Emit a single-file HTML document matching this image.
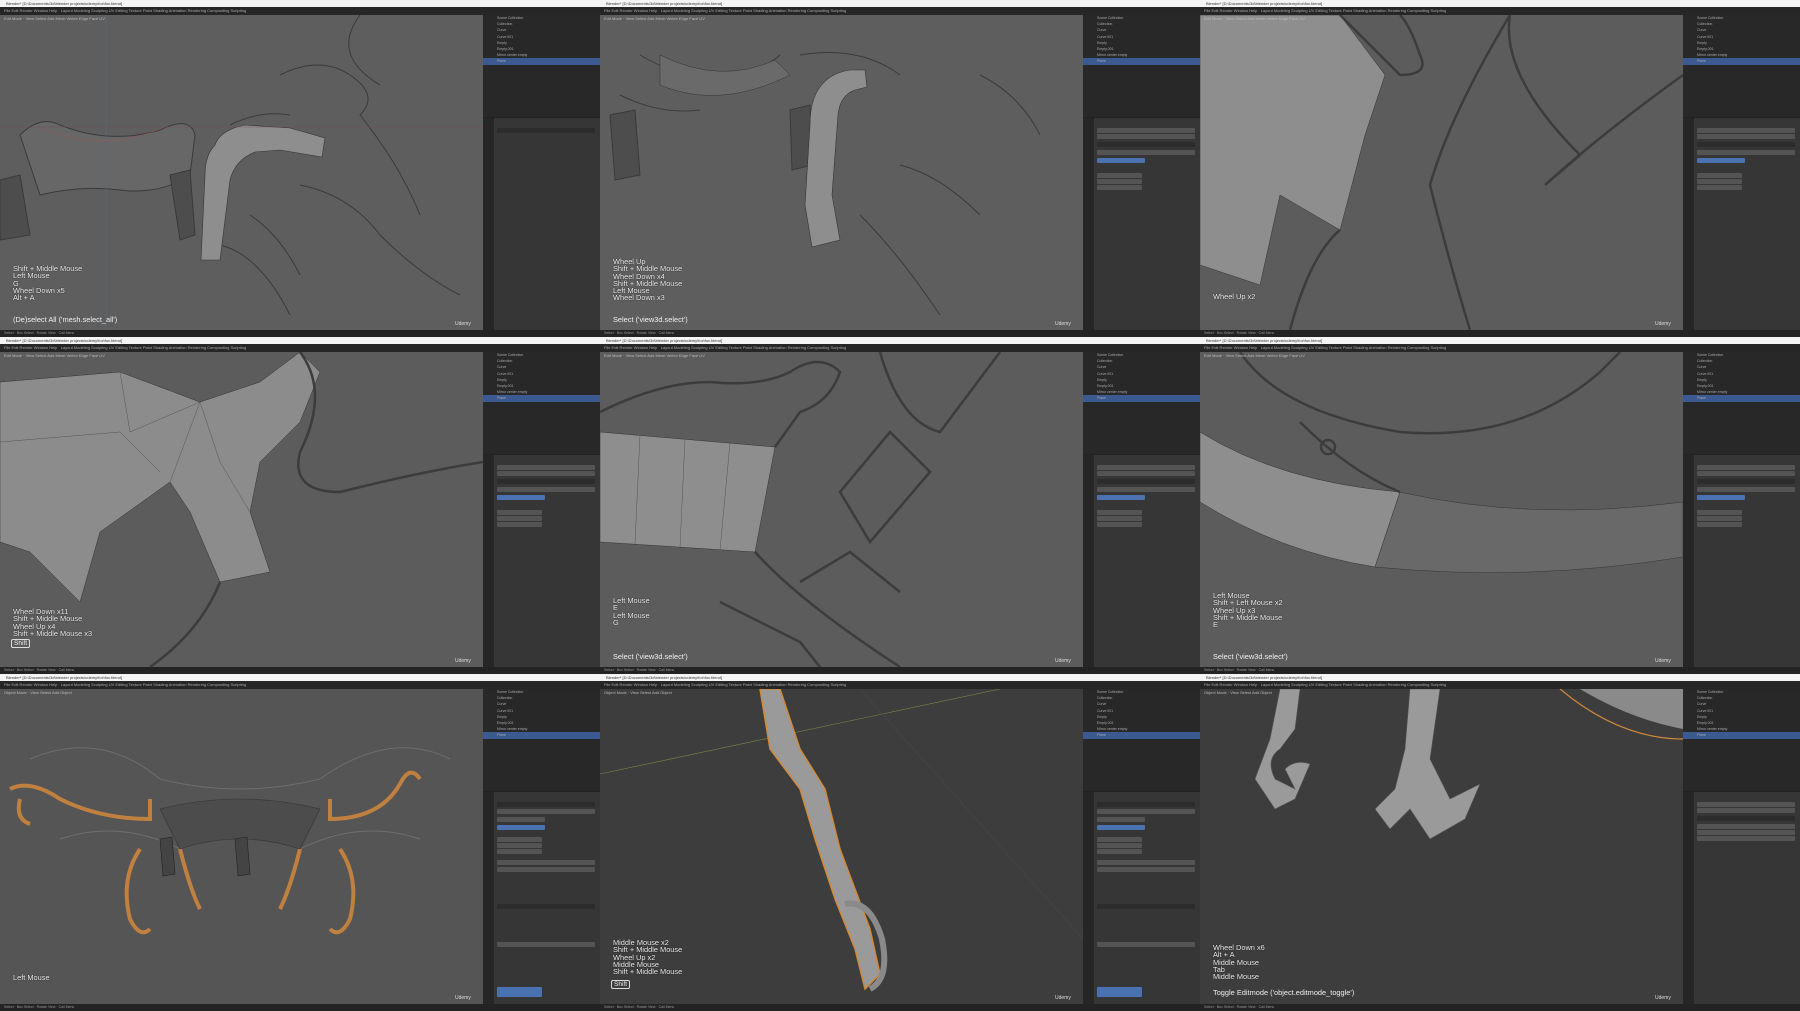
<!DOCTYPE html>
<html><head><meta charset="utf-8">
<style>
*{margin:0;padding:0;box-sizing:border-box}
body{width:1800px;height:1011px;background:#1d1d1d;overflow:hidden;font-family:"Liberation Sans",sans-serif;position:relative}
.c{position:absolute;width:600px;height:337px;overflow:hidden;background:#303030}
.tb{position:absolute;left:0;top:0;width:600px;height:7px;background:#f4f4f4;font-size:4px;color:#333;padding-left:6px;line-height:7px}
.mb{position:absolute;left:0;top:7px;width:600px;height:8px;background:#262626;font-size:4px;color:#aaa;line-height:8px;padding-left:4px;white-space:nowrap}
.vp{position:absolute;left:0;top:15px;width:483px;height:315px}
.vp svg{position:absolute;left:0;top:0}
.hd{position:absolute;left:0;top:15px;width:483px;height:8px;font-size:4px;color:#bbb;line-height:8px;padding-left:4px}
.ol{position:absolute;left:483px;top:15px;width:117px;height:102px;background:#282828}
.ol div{height:6.2px;font-size:3.5px;color:#aaa;line-height:6px;padding-left:14px}
.ol .sel{background:#3b5a92}
.pp{position:absolute;left:483px;top:117px;width:117px;height:213px;background:#363636;border-top:1px solid #222}
.pp .strip{position:absolute;left:0;top:0;width:11px;height:213px;background:#262626}
.pp .r{position:absolute;left:14px;height:5px;background:#545454;border-radius:1px}
.pp .b{background:#4a72b0}
.sb{position:absolute;left:0;top:330px;width:600px;height:7px;background:#232323;font-size:3.5px;color:#999;line-height:7px;padding-left:4px}
.tx{position:absolute;left:13px;color:#f0f0f0;font-size:7.4px;line-height:7.3px;text-shadow:0 0 1px #000}
.op{position:absolute;left:13px;color:#f0f0f0;font-size:7.4px}
.udemy{position:absolute;left:455px;top:321px;color:#ddd;font-size:5px}
.key{position:absolute;left:11px;border:1px solid #ddd;border-radius:2px;color:#eee;font-size:6.5px;padding:0 2px}
</style></head><body>

<!-- Cell template used 9 times with differing viewports -->
<!-- ROW 1 -->
<div class="c" style="left:0;top:0">
 <div class="tb">Blender* [D:\Documents\3d\blender projects\udemy\fox\fox.blend]</div>
 <div class="mb">File Edit Render Window Help &nbsp; Layout Modeling Sculpting UV Editing Texture Paint Shading Animation Rendering Compositing Scripting</div>
 <div class="vp" style="background:#5e5e5e"><svg width="483" height="315" viewBox="0 0 483 315">
  <g fill="none" stroke="#3a3a3a" stroke-width="1">
   <path d="M20 120 Q40 100 60 110 Q110 130 160 115 Q190 100 195 120 L190 160 Q160 180 120 175 Q80 170 40 180 Z" fill="#676767"/>
   <path d="M230 110 Q260 95 290 100 M280 60 Q320 40 350 60 Q380 80 360 100 Q400 150 420 200 M360 0 Q330 40 380 70 M250 200 Q280 220 300 260 M300 170 Q350 180 380 220 Q420 260 460 280 M220 230 Q260 240 290 300"/>
   <path d="M0 165 L20 160 L30 220 L0 225 Z M170 160 L190 155 L195 220 L180 225 Z" fill="#4d4d4d"/>
  </g>
  <path d="M215 130 Q220 115 245 110 L290 113 L325 123 L322 142 L280 135 L255 137 Q235 145 230 165 L220 245 L201 245 L205 160 Q205 140 215 130 Z" fill="#8e8e8e" stroke="#333" stroke-width=".6"/>
  <path d="M40 112 Q100 140 165 112" stroke="#a05555" stroke-width=".5" fill="none"/>
  <line x1="0" y1="112" x2="483" y2="112" stroke="#7a5050" stroke-width=".4"/>
  <line x1="106" y1="0" x2="106" y2="315" stroke="#55688a" stroke-width=".5"/>
 </svg>
 <div class="tx" style="top:250px">Shift + Middle Mouse<br>Left Mouse<br>G<br>Wheel Down x5<br>Alt + A</div>
 <div class="op" style="top:300px">(De)select All ('mesh.select_all')</div></div>
 <div class="hd">Edit Mode · View Select Add Mesh Vertex Edge Face UV</div>
 <div class="ol"><div>Scene Collection</div><div>Collection</div><div>Curve</div><div>Curve.001</div><div>Empty</div><div>Empty.001</div><div>Mirror center empty</div><div class="sel">Plane</div></div>
 <div class="pp"><div class="strip"></div><div class="r" style="top:10px;width:98px;background:#2c2c2c"></div></div>
 <div class="sb">Select · Box Select · Rotate View · Call Menu</div><div class="udemy">Udemy</div>
</div>

<div class="c" style="left:600px;top:0">
 <div class="tb">Blender* [D:\Documents\3d\blender projects\udemy\fox\fox.blend]</div>
 <div class="mb">File Edit Render Window Help &nbsp; Layout Modeling Sculpting UV Editing Texture Paint Shading Animation Rendering Compositing Scripting</div>
 <div class="vp" style="background:#5e5e5e"><svg width="483" height="315" viewBox="0 0 483 315">
  <g fill="none" stroke="#3a3a3a" stroke-width="1">
   <path d="M40 40 Q90 70 140 60 Q170 50 180 40 M20 80 Q60 100 100 95 M200 40 Q260 30 300 60 M300 150 Q340 160 380 200 M260 200 Q300 240 340 300 M380 60 Q420 80 440 120"/>
   <path d="M10 100 L35 95 L40 160 L15 165 Z M190 95 L210 90 L212 150 L192 155 Z" fill="#4d4d4d"/>
  </g>
  <path d="M60 40 Q120 70 175 45 L190 60 Q120 95 60 70 Z" fill="#6a6a6a" stroke="#333" stroke-width=".5"/>
  <path d="M220 72 Q230 58 250 55 L265 55 L267 72 L255 75 Q240 80 238 100 L232 180 L240 225 L212 232 L205 190 L210 110 Q210 85 220 72 Z" fill="#8e8e8e" stroke="#333" stroke-width=".6"/>
 </svg>
 <div class="tx" style="top:243px">Wheel Up<br>Shift + Middle Mouse<br>Wheel Down x4<br>Shift + Middle Mouse<br>Left Mouse<br>Wheel Down x3</div>
 <div class="op" style="top:300px">Select ('view3d.select')</div></div>
 <div class="hd">Edit Mode · View Select Add Mesh Vertex Edge Face UV</div>
 <div class="ol"><div>Scene Collection</div><div>Collection</div><div>Curve</div><div>Curve.001</div><div>Empty</div><div>Empty.001</div><div>Mirror center empty</div><div class="sel">Plane</div></div>
 <div class="pp"><div class="strip"></div><div class="r" style="top:10px;width:98px"></div><div class="r" style="top:16px;width:98px"></div><div class="r" style="top:24px;width:98px;background:#2c2c2c"></div><div class="r" style="top:32px;width:98px"></div><div class="r b" style="top:40px;width:48px"></div><div class="r" style="top:55px;width:45px"></div><div class="r" style="top:61px;width:45px"></div><div class="r" style="top:67px;width:45px"></div></div>
 <div class="sb">Select · Box Select · Rotate View · Call Menu</div><div class="udemy">Udemy</div>
</div>

<div class="c" style="left:1200px;top:0">
 <div class="tb">Blender* [D:\Documents\3d\blender projects\udemy\fox\fox.blend]</div>
 <div class="mb">File Edit Render Window Help &nbsp; Layout Modeling Sculpting UV Editing Texture Paint Shading Animation Rendering Compositing Scripting</div>
 <div class="vp" style="background:#5c5c5c"><svg width="483" height="315" viewBox="0 0 483 315">
  <path d="M0 0 L140 0 L185 60 L165 120 L140 215 L80 180 L60 270 L0 250 Z" fill="#8e8e8e" stroke="#333" stroke-width=".5"/>
  <g fill="none" stroke="#3c3c3c" stroke-width="2.5">
   <path d="M140 0 Q170 30 200 60 Q230 60 220 40 Q210 10 200 0"/>
   <path d="M140 215 Q110 240 90 315 M310 0 Q250 100 230 170 Q250 250 270 315"/>
   <path d="M483 60 Q400 120 345 170 L380 140 Q300 60 310 0"/>
  </g>
 </svg>
 <div class="tx" style="top:278px">Wheel Up x2</div></div>
 <div class="hd">Edit Mode · View Select Add Mesh Vertex Edge Face UV</div>
 <div class="ol"><div>Scene Collection</div><div>Collection</div><div>Curve</div><div>Curve.001</div><div>Empty</div><div>Empty.001</div><div>Mirror center empty</div><div class="sel">Plane</div></div>
 <div class="pp"><div class="strip"></div><div class="r" style="top:10px;width:98px"></div><div class="r" style="top:16px;width:98px"></div><div class="r" style="top:24px;width:98px;background:#2c2c2c"></div><div class="r" style="top:32px;width:98px"></div><div class="r b" style="top:40px;width:48px"></div><div class="r" style="top:55px;width:45px"></div><div class="r" style="top:61px;width:45px"></div><div class="r" style="top:67px;width:45px"></div></div>
 <div class="sb">Select · Box Select · Rotate View · Call Menu</div><div class="udemy">Udemy</div>
</div>

<!-- ROW 2 -->
<div class="c" style="left:0;top:337px">
 <div class="tb">Blender* [D:\Documents\3d\blender projects\udemy\fox\fox.blend]</div>
 <div class="mb">File Edit Render Window Help &nbsp; Layout Modeling Sculpting UV Editing Texture Paint Shading Animation Rendering Compositing Scripting</div>
 <div class="vp" style="background:#5c5c5c"><svg width="483" height="315" viewBox="0 0 483 315">
  <path d="M0 30 L120 20 L200 50 L260 30 L300 0 L320 20 L300 70 L260 110 L250 160 L270 220 L220 230 L190 160 L170 130 L100 180 L80 250 L30 200 L0 190 Z" fill="#8c8c8c" stroke="#333" stroke-width=".5"/>
  <g fill="none" stroke="#3c3c3c" stroke-width="2.5"><path d="M300 0 Q330 40 300 100 Q290 140 340 140 Q420 120 483 110 M220 230 Q200 280 150 315"/></g>
  <g stroke="#555" stroke-width=".5" fill="none"><path d="M0 90 L120 80 L160 120 M120 20 L130 80 L200 50 L170 130 M200 50 L220 110 L250 160"/></g>
 </svg>
 <div class="tx" style="top:256px">Wheel Down x11<br>Shift + Middle Mouse<br>Wheel Up x4<br>Shift + Middle Mouse x3</div>
 <div class="key" style="top:287px">Shift</div></div>
 <div class="hd">Edit Mode · View Select Add Mesh Vertex Edge Face UV</div>
 <div class="ol"><div>Scene Collection</div><div>Collection</div><div>Curve</div><div>Curve.001</div><div>Empty</div><div>Empty.001</div><div>Mirror center empty</div><div class="sel">Plane</div></div>
 <div class="pp"><div class="strip"></div><div class="r" style="top:10px;width:98px"></div><div class="r" style="top:16px;width:98px"></div><div class="r" style="top:24px;width:98px;background:#2c2c2c"></div><div class="r" style="top:32px;width:98px"></div><div class="r b" style="top:40px;width:48px"></div><div class="r" style="top:55px;width:45px"></div><div class="r" style="top:61px;width:45px"></div><div class="r" style="top:67px;width:45px"></div></div>
 <div class="sb">Select · Box Select · Rotate View · Call Menu</div><div class="udemy">Udemy</div>
</div>

<div class="c" style="left:600px;top:337px">
 <div class="tb">Blender* [D:\Documents\3d\blender projects\udemy\fox\fox.blend]</div>
 <div class="mb">File Edit Render Window Help &nbsp; Layout Modeling Sculpting UV Editing Texture Paint Shading Animation Rendering Compositing Scripting</div>
 <div class="vp" style="background:#5c5c5c"><svg width="483" height="315" viewBox="0 0 483 315">
  <path d="M0 80 L175 95 L155 200 L0 190 Z" fill="#8e8e8e" stroke="#333" stroke-width=".5"/>
  <g stroke="#555" stroke-width=".5"><line x1="40" y1="83" x2="35" y2="192"/><line x1="85" y1="87" x2="80" y2="195"/><line x1="130" y1="91" x2="120" y2="198"/></g>
  <g fill="none" stroke="#3c3c3c" stroke-width="2.5">
   <path d="M0 60 Q60 30 110 30 Q160 35 190 20 Q220 0 240 20 Q230 50 200 60 L175 95"/>
   <path d="M240 140 L290 80 L330 120 L270 190 Z M280 0 Q300 70 340 80 L400 0 M155 200 Q200 250 300 315 M200 230 L250 200 L300 240"/>
   <path d="M120 250 L200 290 L220 315"/>
  </g>
 </svg>
 <div class="tx" style="top:245px">Left Mouse<br>E<br>Left Mouse<br>G</div>
 <div class="op" style="top:300px">Select ('view3d.select')</div></div>
 <div class="hd">Edit Mode · View Select Add Mesh Vertex Edge Face UV</div>
 <div class="ol"><div>Scene Collection</div><div>Collection</div><div>Curve</div><div>Curve.001</div><div>Empty</div><div>Empty.001</div><div>Mirror center empty</div><div class="sel">Plane</div></div>
 <div class="pp"><div class="strip"></div><div class="r" style="top:10px;width:98px"></div><div class="r" style="top:16px;width:98px"></div><div class="r" style="top:24px;width:98px;background:#2c2c2c"></div><div class="r" style="top:32px;width:98px"></div><div class="r b" style="top:40px;width:48px"></div><div class="r" style="top:55px;width:45px"></div><div class="r" style="top:61px;width:45px"></div><div class="r" style="top:67px;width:45px"></div></div>
 <div class="sb">Select · Box Select · Rotate View · Call Menu</div><div class="udemy">Udemy</div>
</div>

<div class="c" style="left:1200px;top:337px">
 <div class="tb">Blender* [D:\Documents\3d\blender projects\udemy\fox\fox.blend]</div>
 <div class="mb">File Edit Render Window Help &nbsp; Layout Modeling Sculpting UV Editing Texture Paint Shading Animation Rendering Compositing Scripting</div>
 <div class="vp" style="background:#5c5c5c"><svg width="483" height="315" viewBox="0 0 483 315">
  <path d="M0 80 Q80 130 200 140 L175 215 Q80 200 0 150 Z" fill="#8e8e8e" stroke="#333" stroke-width=".5"/>
  <path d="M200 140 Q330 170 483 150 L483 205 Q330 230 175 215 Z" fill="#696969" stroke="#333" stroke-width=".5"/>
  <g fill="none" stroke="#3c3c3c" stroke-width="2.5"><path d="M40 0 Q80 60 200 80 Q320 90 400 20 L420 0 M100 70 Q150 120 200 140"/><circle cx="128" cy="95" r="7"/></g>
 </svg>
 <div class="tx" style="top:240px">Left Mouse<br>Shift + Left Mouse x2<br>Wheel Up x3<br>Shift + Middle Mouse<br>E</div>
 <div class="op" style="top:300px">Select ('view3d.select')</div></div>
 <div class="hd">Edit Mode · View Select Add Mesh Vertex Edge Face UV</div>
 <div class="ol"><div>Scene Collection</div><div>Collection</div><div>Curve</div><div>Curve.001</div><div>Empty</div><div>Empty.001</div><div>Mirror center empty</div><div class="sel">Plane</div></div>
 <div class="pp"><div class="strip"></div><div class="r" style="top:10px;width:98px"></div><div class="r" style="top:16px;width:98px"></div><div class="r" style="top:24px;width:98px;background:#2c2c2c"></div><div class="r" style="top:32px;width:98px"></div><div class="r b" style="top:40px;width:48px"></div><div class="r" style="top:55px;width:45px"></div><div class="r" style="top:61px;width:45px"></div><div class="r" style="top:67px;width:45px"></div></div>
 <div class="sb">Select · Box Select · Rotate View · Call Menu</div><div class="udemy">Udemy</div>
</div>

<!-- ROW 3 -->
<div class="c" style="left:0;top:674px">
 <div class="tb">Blender* [D:\Documents\3d\blender projects\udemy\fox\fox.blend]</div>
 <div class="mb">File Edit Render Window Help &nbsp; Layout Modeling Sculpting UV Editing Texture Paint Shading Animation Rendering Compositing Scripting</div>
 <div class="vp" style="background:#555"><svg width="483" height="315" viewBox="0 0 483 315">
  <g fill="none" stroke="#6e6e6e" stroke-width="1"><path d="M30 70 Q100 40 160 90 Q240 110 320 90 Q390 40 450 70 M60 150 Q120 130 180 160 M300 160 Q360 130 420 150"/></g>
  <g fill="none" stroke="#c08040" stroke-width="4">
   <path d="M10 100 Q30 90 60 110 Q100 130 150 130 L150 110 M20 110 Q15 130 30 135 M140 160 Q120 190 130 230 Q140 250 150 240 M180 160 Q190 200 200 220"/>
   <path d="M420 90 Q410 75 400 95 Q380 130 330 130 L330 110 M340 160 Q360 190 350 230 Q340 250 330 240 M300 160 Q290 200 280 220"/>
  </g>
  <path d="M160 120 Q240 100 320 120 L300 160 Q240 140 180 160 Z" fill="#4c4c4c" stroke="#333" stroke-width=".6"/>
  <path d="M160 150 L172 148 L175 185 L163 187 Z M235 150 L247 148 L250 185 L238 187 Z" fill="#444" stroke="#222" stroke-width=".6"/>
 </svg>
 <div class="tx" style="top:285px">Left Mouse</div></div>
 <div class="hd">Object Mode · View Select Add Object</div>
 <div class="ol"><div>Scene Collection</div><div>Collection</div><div>Curve</div><div>Curve.001</div><div>Empty</div><div>Empty.001</div><div>Mirror center empty</div><div class="sel">Plane</div></div>
 <div class="pp"><div class="strip"></div><div class="r" style="top:10px;width:98px;background:#2c2c2c"></div><div class="r" style="top:17px;width:98px"></div><div class="r" style="top:25px;width:48px"></div><div class="r b" style="top:33px;width:48px"></div><div class="r" style="top:45px;width:45px"></div><div class="r" style="top:51px;width:45px"></div><div class="r" style="top:57px;width:45px"></div><div class="r" style="top:68px;width:98px"></div><div class="r" style="top:75px;width:98px"></div><div class="r" style="top:112px;width:98px;background:#2c2c2c"></div><div class="r" style="top:150px;width:98px"></div><div class="r b" style="top:195px;width:45px;height:10px"></div></div>
 <div class="sb">Select · Box Select · Rotate View · Call Menu</div><div class="udemy">Udemy</div>
</div>

<div class="c" style="left:600px;top:674px">
 <div class="tb">Blender* [D:\Documents\3d\blender projects\udemy\fox\fox.blend]</div>
 <div class="mb">File Edit Render Window Help &nbsp; Layout Modeling Sculpting UV Editing Texture Paint Shading Animation Rendering Compositing Scripting</div>
 <div class="vp" style="background:#3d3d3d"><svg width="483" height="315" viewBox="0 0 483 315">
  <line x1="0" y1="85" x2="400" y2="0" stroke="#7a8a45" stroke-width=".6"/>
  <line x1="260" y1="0" x2="483" y2="250" stroke="#474747" stroke-width=".6"/>
  <path d="M160 0 L180 0 L200 60 L225 100 L240 160 L270 240 L280 285 L265 300 L255 260 L235 210 L215 150 L200 100 L170 60 Z" fill="#9a9a9a" stroke="#d08a3a" stroke-width="1.5"/>
  <path d="M245 215 Q270 210 282 250 Q290 290 270 300" fill="none" stroke="#8a8a8a" stroke-width="6"/>
 </svg>
 <div class="tx" style="top:250px">Middle Mouse x2<br>Shift + Middle Mouse<br>Wheel Up x2<br>Middle Mouse<br>Shift + Middle Mouse</div>
 <div class="key" style="top:291px">Shift</div></div>
 <div class="hd">Object Mode · View Select Add Object</div>
 <div class="ol"><div>Scene Collection</div><div>Collection</div><div>Curve</div><div>Curve.001</div><div>Empty</div><div>Empty.001</div><div>Mirror center empty</div><div class="sel">Plane</div></div>
 <div class="pp"><div class="strip"></div><div class="r" style="top:10px;width:98px;background:#2c2c2c"></div><div class="r" style="top:17px;width:98px"></div><div class="r" style="top:25px;width:48px"></div><div class="r b" style="top:33px;width:48px"></div><div class="r" style="top:45px;width:45px"></div><div class="r" style="top:51px;width:45px"></div><div class="r" style="top:57px;width:45px"></div><div class="r" style="top:68px;width:98px"></div><div class="r" style="top:75px;width:98px"></div><div class="r" style="top:112px;width:98px;background:#2c2c2c"></div><div class="r" style="top:150px;width:98px"></div><div class="r b" style="top:195px;width:45px;height:10px"></div></div>
 <div class="sb">Select · Box Select · Rotate View · Call Menu</div><div class="udemy">Udemy</div>
</div>

<div class="c" style="left:1200px;top:674px">
 <div class="tb">Blender* [D:\Documents\3d\blender projects\udemy\fox\fox.blend]</div>
 <div class="mb">File Edit Render Window Help &nbsp; Layout Modeling Sculpting UV Editing Texture Paint Shading Animation Rendering Compositing Scripting</div>
 <div class="vp" style="background:#3d3d3d"><svg width="483" height="315" viewBox="0 0 483 315">
  <path d="M360 0 Q420 50 483 50" fill="none" stroke="#d08a3a" stroke-width="1.2"/>
  <path d="M380 0 L483 0 L483 40 Q430 30 380 0 Z" fill="#8a8a8a"/>
  <path d="M80 0 L100 0 L95 40 L80 60 Q65 70 75 90 L95 100 L85 80 Q95 70 110 75 L95 110 L75 120 L55 90 L70 50 Z" fill="#9a9a9a" stroke="#555" stroke-width=".6"/>
  <path d="M210 0 L240 0 L230 70 L250 110 L280 95 L265 130 L230 150 L210 120 L190 140 L175 120 L195 100 L205 60 Z" fill="#9a9a9a" stroke="#555" stroke-width=".6"/>
 </svg>
 <div class="tx" style="top:255px">Wheel Down x6<br>Alt + A<br>Middle Mouse<br>Tab<br>Middle Mouse</div>
 <div class="op" style="top:299px">Toggle Editmode ('object.editmode_toggle')</div></div>
 <div class="hd">Object Mode · View Select Add Object</div>
 <div class="ol"><div>Scene Collection</div><div>Collection</div><div>Curve</div><div>Curve.001</div><div>Empty</div><div>Empty.001</div><div>Mirror center empty</div><div class="sel">Plane</div></div>
 <div class="pp"><div class="strip"></div><div class="r" style="top:10px;width:98px"></div><div class="r" style="top:16px;width:98px"></div><div class="r" style="top:24px;width:98px;background:#2c2c2c"></div><div class="r" style="top:32px;width:98px"></div><div class="r" style="top:38px;width:98px"></div><div class="r" style="top:44px;width:98px"></div></div>
 <div class="sb">Select · Box Select · Rotate View · Call Menu</div><div class="udemy">Udemy</div>
</div>
</body></html>
